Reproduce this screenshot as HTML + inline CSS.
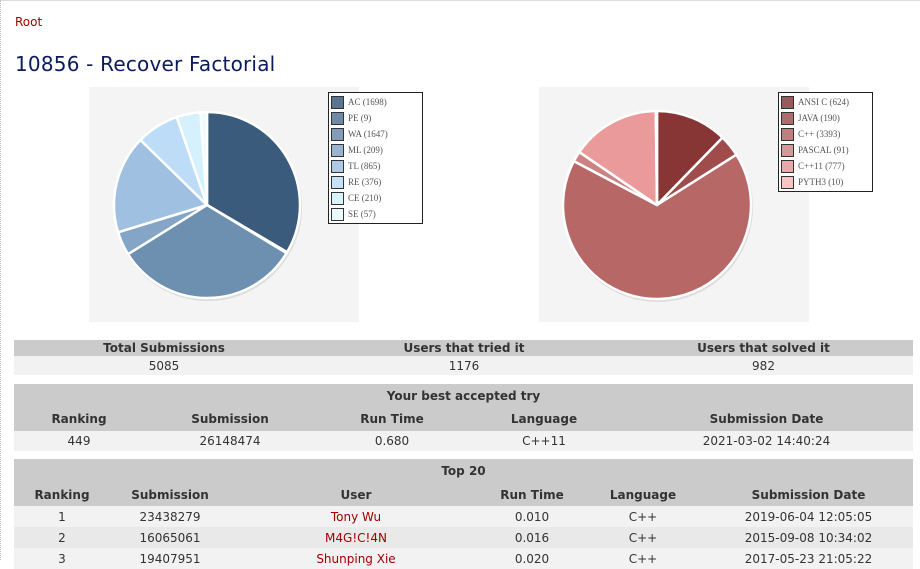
<!DOCTYPE html>
<html><head><meta charset="utf-8"><style>
*{margin:0;padding:0;box-sizing:border-box}
body{width:920px;height:560px;overflow:hidden;background:#fff;font-family:"DejaVu Sans","Liberation Sans",sans-serif;font-size:12px;color:#333;position:relative}
.frame{position:absolute;left:0;top:0;width:920px;height:560px;border-left:1px dotted #bbb;border-top:1px solid #ddd}
.root{position:absolute;left:15px;top:15px;color:#900;font-size:12px}
h1{position:absolute;left:15px;top:52px;font-size:20px;font-weight:normal;color:#0b1a5e;letter-spacing:0.2px}
.chart{position:absolute;top:87px;width:270px;height:235px;background:#f4f4f4}
.legend{position:absolute;background:#fff;border:1px solid #222;font-family:"Liberation Serif",serif;font-size:9px;color:#555;padding:1px 2px}
.legend div{height:16px;line-height:16px;display:flex;align-items:center}
.legend span{display:inline-block;width:13px;height:13px;border:1px solid #333;margin-right:4px}
table{position:absolute;left:14px;width:899px;border-collapse:collapse;text-align:center;table-layout:fixed}
td,th{padding:0}
.hd{background:#cbcbcb;font-weight:bold}
.r1{background:#f2f2f2}
.r2{background:#e9e9e9}
a{color:#a00000;text-decoration:none}
</style></head><body>
<div class="frame"></div>
<div class="root">Root</div>
<h1>10856 - Recover Factorial</h1>
<div class="chart" style="left:89px"><svg width="270" height="235" id="p1"></svg></div>
<div class="chart" style="left:539px"><svg width="270" height="235" id="p2"></svg></div>
<div class="legend" style="left:328px;top:92px;width:95px">
<div><span style="background:#5a7590"></span>AC (1698)</div>
<div><span style="background:#6f8aa6"></span>PE (9)</div>
<div><span style="background:#839db8"></span>WA (1647)</div>
<div><span style="background:#98b4cf"></span>ML (209)</div>
<div><span style="background:#adc9e3"></span>TL (865)</div>
<div><span style="background:#c6e0f8"></span>RE (376)</div>
<div><span style="background:#d9f3fd"></span>CE (210)</div>
<div><span style="background:#eafcfd"></span>SE (57)</div>
</div>
<div class="legend" style="left:778px;top:92px;width:95px">
<div><span style="background:#9a5a5a"></span>ANSI C (624)</div>
<div><span style="background:#ab6e6e"></span>JAVA (190)</div>
<div><span style="background:#bd8080"></span>C++ (3393)</div>
<div><span style="background:#d49a9a"></span>PASCAL (91)</div>
<div><span style="background:#e6aaaa"></span>C++11 (777)</div>
<div><span style="background:#fbc4c4"></span>PYTH3 (10)</div>
</div>
<table style="top:340px">
<colgroup><col style="width:300px"><col style="width:300px"><col></colgroup>
<tr class="hd" style="height:16px"><td>Total Submissions</td><td>Users that tried it</td><td>Users that solved it</td></tr>
<tr class="r1" style="height:19px"><td>5085</td><td>1176</td><td>982</td></tr>
</table>
<table style="top:384px">
<colgroup><col style="width:130px"><col style="width:172px"><col style="width:152px"><col style="width:152px"><col></colgroup>
<tr class="hd" style="height:23px"><td colspan="5">Your best accepted try</td></tr>
<tr class="hd" style="height:24px"><td>Ranking</td><td>Submission</td><td>Run Time</td><td>Language</td><td>Submission Date</td></tr>
<tr class="r1" style="height:20px"><td>449</td><td>26148474</td><td>0.680</td><td>C++11</td><td>2021-03-02 14:40:24</td></tr>
</table>
<table style="top:459px">
<colgroup><col style="width:96px"><col style="width:120px"><col style="width:252px"><col style="width:100px"><col style="width:122px"><col></colgroup>
<tr class="hd" style="height:24px"><td colspan="6">Top 20</td></tr>
<tr class="hd" style="height:23px"><td>Ranking</td><td>Submission</td><td>User</td><td>Run Time</td><td>Language</td><td>Submission Date</td></tr>
<tr class="r1" style="height:21px"><td>1</td><td>23438279</td><td><a>Tony Wu</a></td><td>0.010</td><td>C++</td><td>2019-06-04 12:05:05</td></tr>
<tr class="r2" style="height:21px"><td>2</td><td>16065061</td><td><a>M4G!C!4N</a></td><td>0.016</td><td>C++</td><td>2015-09-08 10:34:02</td></tr>
<tr class="r1" style="height:21px"><td>3</td><td>19407951</td><td><a>Shunping Xie</a></td><td>0.020</td><td>C++</td><td>2017-05-23 21:05:22</td></tr>
</table>
<script>
function pie(id,cx,cy,r,vals,cols){
 var s=document.getElementById(id),tot=vals.reduce((a,b)=>a+b,0),a=0,h='<circle cx="'+(cx+1)+'" cy="'+(cy+2)+'" r="'+(r+1)+'" fill="#ddd"/>';
 for(var i=0;i<vals.length;i++){
  var b=a+vals[i]/tot*2*Math.PI;
  var x1=cx+r*Math.sin(a),y1=cy-r*Math.cos(a),x2=cx+r*Math.sin(b),y2=cy-r*Math.cos(b);
  h+='<path d="M'+cx+','+cy+' L'+x1+','+y1+' A'+r+','+r+' 0 '+((b-a)>Math.PI?1:0)+' 1 '+x2+','+y2+' Z" fill="'+cols[i]+'" stroke="#fff" stroke-width="2.5" stroke-linejoin="round"/>';
  a=b;}
 s.innerHTML=h;}
pie('p1',118,118,93,[1698,9,1647,209,865,376,210,57],['#3a5b7b','#5a7a98','#6d8fb0','#84a5c5','#9fc0e1','#bcdcf8','#d4f1fd','#eafcfe']);
pie('p2',118,118,94,[624,190,3393,91,777,10],['#883535','#a04c4c','#b86767','#cc8282','#ea9a9a','#fbc0c0']);
</script>
</body></html>
